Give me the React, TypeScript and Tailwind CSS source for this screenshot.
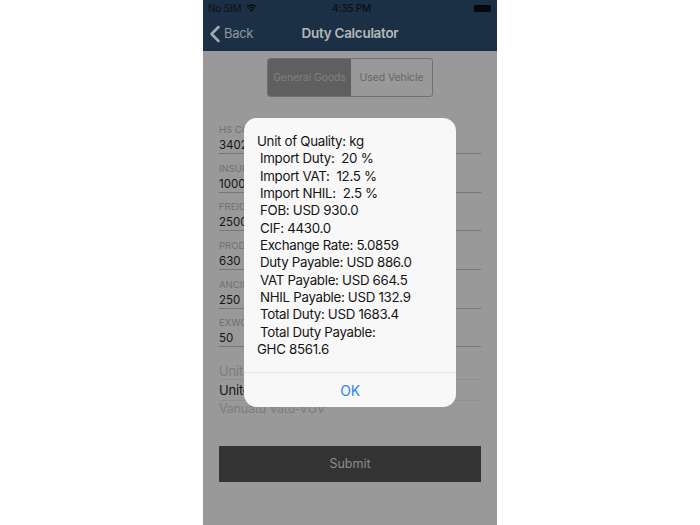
import { ChevronLeft } from 'lucide-react'

const fields = [
  { label: 'HS CODE', value: '34021190' },
  { label: 'INSURANCE', value: '1000' },
  { label: 'FREIGHT', value: '2500' },
  { label: 'PRODUCT', value: '630' },
  { label: 'ANCILLARY', value: '250' },
  { label: 'EXWORKS', value: '50' },
]

const lines = [
  { text: 'Unit of Quality: kg', flush: true },
  { text: 'Import Duty:  20 %' },
  { text: 'Import VAT:  12.5 %' },
  { text: 'Import NHIL:  2.5 %' },
  { text: 'FOB: USD 930.0' },
  { text: 'CIF: 4430.0' },
  { text: 'Exchange Rate: 5.0859' },
  { text: 'Duty Payable: USD 886.0' },
  { text: 'VAT Payable: USD 664.5' },
  { text: 'NHIL Payable: USD 132.9' },
  { text: 'Total Duty: USD 1683.4' },
  { text: 'Total Duty Payable:' },
  { text: 'GHC 8561.6', flush: true },
]

function WifiIcon() {
  return (
    <svg width="11" height="8" viewBox="0 0 14 10" fill="#0b0f14">
      <path d="M7 10 4.6 7.3a3.6 3.6 0 0 1 4.8 0Z" />
      <path d="M3.7 6.3 2.5 5a6.7 6.7 0 0 1 9 0l-1.2 1.3a5 5 0 0 0-6.6 0Z" />
      <path d="M1.7 4.1.5 2.8a9.7 9.7 0 0 1 13 0l-1.2 1.3a8 8 0 0 0-10.6 0Z" />
    </svg>
  )
}

export default function App() {
  return (
    <div className="w-[700px] h-[525px] bg-white flex justify-center font-['Inter',sans-serif] overflow-hidden">
      <div className="relative w-[294px] h-[525px] bg-[#999999] flex flex-col">
        <header className="h-[51px] bg-[#1b3044] flex flex-col shrink-0">
          <div className="h-[16px] pl-[5px] pr-[6px] relative flex items-center justify-between text-[10px] tracking-[-0.2px] text-[#0b0f14]">
            <div className="flex items-center gap-[5px]">
              <span>No SIM</span>
              <WifiIcon />
            </div>
            <span className="absolute left-[129px] top-0 leading-[16px] font-medium">4:35 PM</span>
            <div className="w-[17px] h-[7px] rounded-[2px] bg-[#05080c]" />
          </div>
          <div className="relative flex-1 flex items-center justify-center">
            <div className="absolute left-[-2px] top-[4px] flex items-center text-[#8f979f] text-[13px] tracking-[-0.3px]">
              <ChevronLeft size={28} strokeWidth={2.2} className="text-[#a3a9af] -mr-[5px]" />
              <span>Back</span>
            </div>
            <span className="text-[#b5b8bb] text-[13.5px] font-semibold tracking-[-0.3px]">Duty Calculator</span>
          </div>
        </header>

        <div className="flex-1 flex flex-col px-[16px]">
          <div className="mt-[7px] mx-auto w-[166px] h-[39px] flex rounded-[3px] border border-[#707070] overflow-hidden text-[10.5px] tracking-[-0.1px]">
            <div className="w-[83px] pt-[1px] bg-[#5f5f5f] text-[#7f7f7f] flex items-center justify-center">General Goods</div>
            <div className="flex-1 pt-[1px] text-[#666666] flex items-center justify-center">Used Vehicle</div>
          </div>

          <div className="mt-[24px] flex flex-col gap-[5.7px]">
            {fields.map(({ label, value }) => (
              <div key={label} className="h-[33px] pt-[1px] border-b border-[#777777] flex flex-col">
                <span className="text-[9.5px] leading-[15px] text-[#707070]">{label}</span>
                <span className="text-[11.5px] leading-[17px] text-[#141414]">{value}</span>
              </div>
            ))}
          </div>

          <div className="mt-[15px] h-[18px] border-b border-[#8f8f8f] text-[13px] leading-[18px] tracking-[-0.2px] text-[#7c7c7c]">Unit of Quality</div>
          <div className="h-[21px] border-b border-[#8f8f8f] text-[13px] leading-[20px] tracking-[-0.2px] text-[#141414]">United States Dollar</div>
          <div className="text-[12.5px] leading-[16px] tracking-[-0.2px] text-[#7c7c7c]">Vanuatu Vatu-VUV</div>

          <button className="mt-[29px] h-[36px] bg-[#333333] text-[#8d8d8d] text-[12.5px]">Submit</button>
        </div>

        <div className="absolute left-[41px] top-[118px] w-[212px] h-[289px] rounded-[13px] bg-[#f8f8f8] flex flex-col">
          <div className="flex-1 pl-[13px] pt-[15px] text-[13.3px] leading-[17.33px] tracking-[-0.3px] text-[#141414] whitespace-pre">
            {lines.map(({ text, flush }) => (
              <div key={text} className={flush ? '' : 'pl-[3px]'}>{text}</div>
            ))}
          </div>
          <div className="h-[35px] border-t border-[#e4e4e4] flex items-center justify-center text-[#2a85ec] text-[14px] tracking-[-0.2px]">OK</div>
        </div>
      </div>
    </div>
  )
}
